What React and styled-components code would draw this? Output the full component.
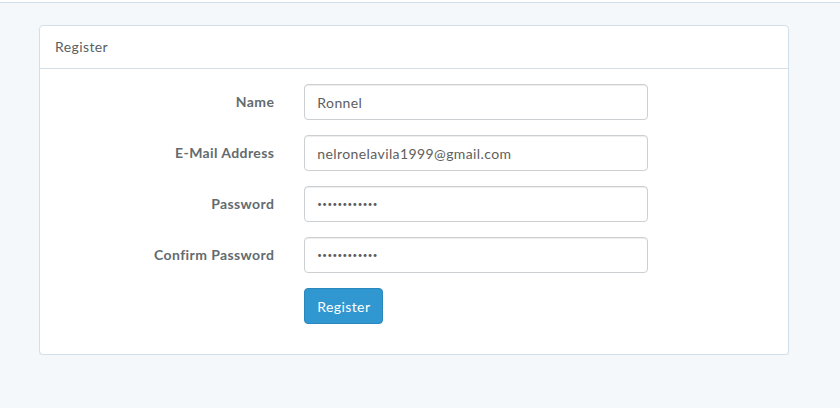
import React from 'react';
import styled, { createGlobalStyle } from 'styled-components';

const GlobalStyle = createGlobalStyle`
  html, body {
    margin: 0;
    padding: 0;
    background: #f5f8fa;
    font-family: Lato, "Open Sans", sans-serif;
    font-size: 14px;
    line-height: 1.6;
    letter-spacing: 0.4px;
    color: #636b6f;
  }
  * { box-sizing: border-box; }
`;

const Navbar = styled.div`
  height: 3px;
  background: #fff;
  border-bottom: 1px solid #d3e0e9;
`;

const Container = styled.div`
  padding: 22px 51px 0 39px;
`;

const Panel = styled.div`
  background: #fff;
  border: 1px solid #d3e0e9;
  border-radius: 4px;
  box-shadow: 0 1px 1px rgba(0, 0, 0, 0.05);
`;

const PanelHeading = styled.div`
  height: 43px;
  padding: 0 15px;
  display: flex;
  align-items: center;
  border-bottom: 1px solid #d3e0e9;
  color: #5a5f62;
  font-weight: 400;
  font-size: 14px;
`;

const PanelBody = styled.form`
  padding: 15px;
  display: flex;
  flex-direction: column;
`;

const Row = styled.div`
  display: grid;
  grid-template-columns: 4fr 6fr 2fr;
  margin: 0 -15px 15px;
  align-items: center;
`;

const Label = styled.label`
  padding: 0 15px;
  text-align: right;
  font-weight: 700;
  color: #636b6f;
`;

const Field = styled.div`
  padding: 0 15px;
  grid-column: 2;
`;

const Input = styled.input`
  display: block;
  width: 100%;
  height: 36px;
  padding: 6px 12px;
  font-family: inherit;
  font-size: ${(p) => (p.type === 'password' ? '8px' : '14px')};
  letter-spacing: inherit;
  color: #5e5e5e;
  background: #fff;
  border: 1px solid #ccd0d2;
  border-radius: 4px;
  box-shadow: inset 0 1px 1px rgba(0, 0, 0, 0.075);
  outline: none;
`;

const Button = styled.button`
  height: 36px;
  padding: 0 12px;
  font-family: inherit;
  font-size: 14px;
  letter-spacing: inherit;
  color: #fff;
  background: #3097d1;
  border: 1px solid #2a88bd;
  border-radius: 4px;
  cursor: pointer;
`;

const fields = [
  { label: 'Name', type: 'text', value: 'Ronnel' },
  { label: 'E-Mail Address', type: 'email', value: 'nelronelavila1999@gmail.com' },
  { label: 'Password', type: 'password', value: 'abcdefghijkl' },
  { label: 'Confirm Password', type: 'password', value: 'abcdefghijkl' },
];

export default function App() {
  return (
    <>
      <GlobalStyle />
      <Navbar />
      <Container>
        <Panel>
          <PanelHeading>Register</PanelHeading>
          <PanelBody onSubmit={(e) => e.preventDefault()}>
            {fields.map((f) => (
              <Row key={f.label}>
                <Label>{f.label}</Label>
                <Field>
                  <Input type={f.type} defaultValue={f.value} readOnly />
                </Field>
              </Row>
            ))}
            <Row>
              <Field>
                <Button type="submit">Register</Button>
              </Field>
            </Row>
          </PanelBody>
        </Panel>
      </Container>
    </>
  );
}
